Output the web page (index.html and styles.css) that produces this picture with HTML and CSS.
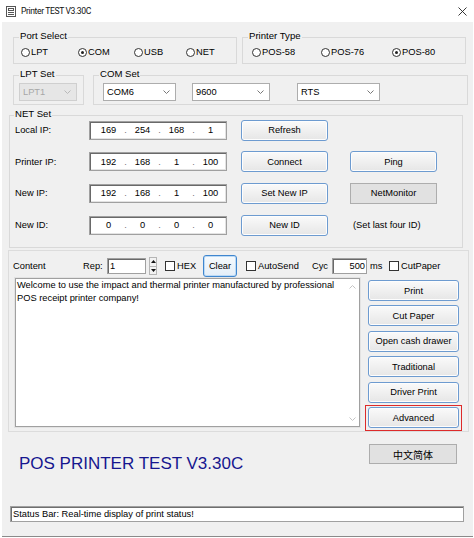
FILE: index.html
```html
<!DOCTYPE html>
<html>
<head>
<meta charset="utf-8">
<title>Printer TEST V3.30C</title>
<link rel="stylesheet" href="styles.css">
</head>
<body>
<div class="titlebar">
  <svg class="app-icon" viewBox="0 0 10 11" width="10" height="11">
    <rect x="0.5" y="0.5" width="9" height="10" fill="#fff" stroke="#555"/>
    <rect x="2.5" y="2.5" width="5" height="2" fill="none" stroke="#555"/>
    <line x1="2" y1="6.5" x2="8" y2="6.5" stroke="#555"/>
    <line x1="2" y1="8.5" x2="8" y2="8.5" stroke="#555"/>
  </svg>
  <span class="title">Printer TEST V3.30C</span>
  <svg class="close" viewBox="0 0 9 9" width="9" height="9">
    <line x1="0.5" y1="0.5" x2="8.5" y2="8.5" stroke="#222" stroke-width="0.9"/>
    <line x1="8.5" y1="0.5" x2="0.5" y2="8.5" stroke="#222" stroke-width="0.9"/>
  </svg>
</div>

<div class="window">
  <div class="row1">
    <fieldset class="grp port">
      <legend>Port Select</legend>
      <div class="radios port-radios">
        <label class="radio w57"><span class="circle"></span>LPT</label>
        <label class="radio w56"><span class="circle on"></span>COM</label>
        <label class="radio w52"><span class="circle"></span>USB</label>
        <label class="radio"><span class="circle"></span>NET</label>
      </div>
    </fieldset>
    <fieldset class="grp ptype">
      <legend>Printer Type</legend>
      <div class="radios pt-radios">
        <label class="radio w69"><span class="circle"></span>POS-58</label>
        <label class="radio w71"><span class="circle"></span>POS-76</label>
        <label class="radio"><span class="circle on"></span>POS-80</label>
      </div>
    </fieldset>
  </div>

  <div class="row2">
    <fieldset class="grp lpt">
      <legend>LPT Set</legend>
      <div class="combos lpt-combos">
        <div class="combo disabled w58"><span>LPT1</span><svg class="chev" viewBox="0 0 7 4" width="7" height="4"><polyline points="0.5,0.5 3.5,3.5 6.5,0.5" fill="none" stroke="#b8b8b8"/></svg></div>
      </div>
    </fieldset>
    <fieldset class="grp com">
      <legend>COM Set</legend>
      <div class="combos com-combos">
        <div class="combo w73"><span>COM6</span><svg class="chev" viewBox="0 0 7 4" width="7" height="4"><polyline points="0.5,0.5 3.5,3.5 6.5,0.5" fill="none" stroke="#777"/></svg></div>
        <div class="combo w78 ml16"><span>9600</span><svg class="chev" viewBox="0 0 7 4" width="7" height="4"><polyline points="0.5,0.5 3.5,3.5 6.5,0.5" fill="none" stroke="#777"/></svg></div>
        <div class="combo w83 ml27"><span>RTS</span><svg class="chev" viewBox="0 0 7 4" width="7" height="4"><polyline points="0.5,0.5 3.5,3.5 6.5,0.5" fill="none" stroke="#777"/></svg></div>
      </div>
    </fieldset>
  </div>

  <fieldset class="grp net">
    <legend>NET Set</legend>
    <div class="netrows">
      <div class="netrow">
        <span class="lbl">Local IP:</span>
        <div class="ipfield"><span class="oct">169</span><span class="dot">.</span><span class="oct">254</span><span class="dot">.</span><span class="oct">168</span><span class="dot">.</span><span class="oct">1</span></div>
        <button class="btn net-btn">Refresh</button>
      </div>
      <div class="netrow">
        <span class="lbl">Printer IP:</span>
        <div class="ipfield"><span class="oct">192</span><span class="dot">.</span><span class="oct">168</span><span class="dot">.</span><span class="oct">1</span><span class="dot">.</span><span class="oct">100</span></div>
        <button class="btn net-btn">Connect</button>
        <button class="btn net-btn2">Ping</button>
      </div>
      <div class="netrow">
        <span class="lbl">New IP:</span>
        <div class="ipfield"><span class="oct">192</span><span class="dot">.</span><span class="oct">168</span><span class="dot">.</span><span class="oct">1</span><span class="dot">.</span><span class="oct">100</span></div>
        <button class="btn net-btn">Set New IP</button>
        <button class="btn flat net-btn2">NetMonitor</button>
      </div>
      <div class="netrow">
        <span class="lbl">New ID:</span>
        <div class="ipfield"><span class="oct">0</span><span class="dot">.</span><span class="oct">0</span><span class="dot">.</span><span class="oct">0</span><span class="dot">.</span><span class="oct">0</span></div>
        <button class="btn net-btn">New ID</button>
        <span class="hint">(Set last four ID)</span>
      </div>
    </div>
  </fieldset>

  <div class="content">
    <div class="toolbar">
      <span class="t-content">Content</span>
      <span class="t-rep">Rep:</span>
      <div class="field rep-field">1</div>
      <div class="spinner">
        <span class="spin-half"><svg viewBox="0 0 5 3" width="5" height="3"><polygon points="0,3 2.5,0 5,3" fill="#111"/></svg></span>
        <span class="spin-half"><svg viewBox="0 0 5 3" width="5" height="3"><polygon points="0,0 2.5,3 5,0" fill="#111"/></svg></span>
      </div>
      <label class="check hex"><span class="box"></span>HEX</label>
      <button class="btn focused clear">Clear</button>
      <label class="check autosend"><span class="box"></span>AutoSend</label>
      <span class="t-cyc">Cyc</span>
      <div class="field cyc-field">500</div>
      <span class="t-ms">ms</span>
      <label class="check"><span class="box"></span>CutPaper</label>
    </div>
    <div class="content-body">
      <div class="textarea">
        <div class="text">Welcome to use the impact and thermal printer manufactured by professional<br>POS receipt printer company!</div>
        <div class="vscroll">
          <svg viewBox="0 0 7 4" width="7" height="4"><polyline points="0.5,3.5 3.5,0.5 6.5,3.5" fill="none" stroke="#c4c4c4"/></svg>
          <svg viewBox="0 0 7 4" width="7" height="4"><polyline points="0.5,0.5 3.5,3.5 6.5,0.5" fill="none" stroke="#c4c4c4"/></svg>
        </div>
      </div>
      <div class="side-btns">
        <button class="btn side">Print</button>
        <button class="btn side">Cut Paper</button>
        <button class="btn side">Open cash drawer</button>
        <button class="btn side">Traditional</button>
        <button class="btn side">Driver Print</button>
        <button class="btn side marked">Advanced</button>
      </div>
    </div>
  </div>

  <div class="bottom-row">
    <div class="bigtitle">POS PRINTER TEST V3.30C</div>
    <button class="btn flat lang">中文简体</button>
  </div>

  <div class="status">Status Bar: Real-time display of print status!</div>
</div>
</body>
</html>
```

FILE: styles.css
```css
* { box-sizing: border-box; }
html, body { margin: 0; padding: 0; }
body {
  width: 474px;
  height: 538px;
  overflow: hidden;
  background: #ffffff;
  font-family: "Liberation Sans", Arial, sans-serif;
  font-size: 9.3px;
  color: #000;
}

/* title bar */
.titlebar {
  height: 22px;
  display: flex;
  align-items: center;
  padding-left: 6px;
  background: #fff;
}
.app-icon { margin-right: 5px; flex: none; }
.title {
  font-family: Roboto, "Noto Sans", sans-serif;
  font-size: 8.6px;
  letter-spacing: -0.4px;
  color: #111;
}
.close { margin-left: auto; margin-right: 7px; }

/* window body */
.window {
  margin-left: 2px;
  width: 471px;
  height: 515px;
  background: #f0f0f0;
  border-bottom: 1px solid #8a8a8a;
  padding-top: 9px;
}

/* group boxes */
.grp {
  margin: 0;
  padding: 0;
  min-width: 0;
  border: 1px solid #d9d9d9;
}
.grp legend {
  margin-left: 5px;
  padding: 0 1px 2px;
  line-height: 10px;
  font-size: 9.6px;
}

.row1 {
  display: flex;
  gap: 5px;
  margin-left: 11px;
}
.port, .ptype { width: 224px; }

.radios {
  display: flex;
  align-items: center;
  height: 20px;
  padding: 2px 0 4px 7px;
}
.pt-radios { padding-left: 9px; }
.radio {
  display: flex;
  align-items: center;
  gap: 1px;
  white-space: nowrap;
}
.w52 { width: 52px; }
.w56 { width: 56px; }
.w57 { width: 57px; }
.w69 { width: 69px; }
.w71 { width: 71px; }
.circle {
  width: 9px;
  height: 9px;
  border-radius: 50%;
  border: 1px solid #333;
  background: #fff;
  display: flex;
  align-items: center;
  justify-content: center;
  flex: none;
}
.circle.on::after {
  content: "";
  width: 3px;
  height: 3px;
  border-radius: 50%;
  background: #222;
}

.row2 {
  display: flex;
  gap: 9px;
  margin: 5px 0 0 11px;
}
.lpt { width: 71px; }
.com { width: 375px; }
.combos {
  display: flex;
  align-items: center;
  padding: 2px 0 3px 5px;
}
.com-combos { padding-left: 9px; }
.combo {
  height: 18px;
  border: 1px solid #adadad;
  background: #fff;
  display: flex;
  align-items: center;
  justify-content: space-between;
  padding: 0 5px 0 3px;
}
.combo.disabled {
  background: #e6e6e6;
  border-color: #cfcfcf;
  color: #a7a7a7;
}
.w58 { width: 58px; }
.w73 { width: 73px; }
.w78 { width: 78px; }
.w83 { width: 83px; }
.ml16 { margin-left: 16px; }
.ml27 { margin-left: 27px; }

/* NET set */
.net {
  width: 454px;
  margin: 4px 0 0 7px;
}
.net legend { margin-left: 4px; }
.netrows {
  display: flex;
  flex-direction: column;
  gap: 9.7px;
  margin-top: -2px;
  padding: 0 0 11px 5px;
}
.netrow {
  display: flex;
  align-items: center;
  height: 22px;
}
.lbl { width: 74px; }
.ipfield {
  width: 138px;
  height: 19px;
  display: flex;
  align-items: center;
  padding-left: 5px;
  background: #fff;
  border: 1px solid #a0a0a0;
  box-shadow: inset 1px 1px 0 #696969, inset -1px -1px 0 #e3e3e3;
}
.oct { width: 27px; text-align: center; }
.dot { width: 7px; text-align: center; color: #777; }
.net-btn { margin-left: 14px; }
.net-btn2 { margin-left: 22px; }
.hint { margin-left: 25px; }

/* buttons */
.btn {
  position: relative;
  font-family: "Liberation Sans", Arial, sans-serif;
  font-size: 9.3px;
  color: #000;
  display: flex;
  align-items: center;
  justify-content: center;
  padding: 0;
  width: 87px;
  height: 21px;
  border: 1px solid #6d9bd0;
  border-radius: 3px;
  background: linear-gradient(#fafafa, #e6e6e6);
  box-shadow: inset 0 0 0 1px #fdfdfd;
  white-space: nowrap;
}
.btn.flat {
  border: 1px solid #adadad;
  border-radius: 0;
  background: #e1e1e1;
  box-shadow: none;
}
.btn.focused {
  border-color: #3f86cf;
  background: linear-gradient(#f6fafd, #e4eef8);
  box-shadow: inset 0 0 0 1px #bcdaf5;
}

/* content box */
.content {
  margin: 2px 0 0 6px;
  width: 461px;
  border: 1px solid #dcdcdc;
  padding: 4px 0 3px 4px;
}
.toolbar {
  display: flex;
  align-items: center;
  height: 22px;
  white-space: nowrap;
}
.t-content { width: 70px; }
.t-rep { width: 24px; }
.field {
  height: 16px;
  background: #fff;
  border: 1px solid #a0a0a0;
  box-shadow: inset 1px 1px 0 #696969;
  display: flex;
  align-items: center;
}
.rep-field { width: 39px; padding-left: 2px; }
.spinner {
  width: 8px;
  height: 18px;
  margin-left: 3px;
  display: flex;
  flex-direction: column;
  border: 1px solid #b5b5b5;
  background: #f2f2f2;
}
.spin-half {
  flex: 1;
  display: flex;
  align-items: center;
  justify-content: center;
}
.spin-half + .spin-half { border-top: 1px solid #b5b5b5; }
.check {
  display: flex;
  align-items: center;
  gap: 2px;
}
.box {
  width: 10px;
  height: 10px;
  border: 1px solid #333;
  background: #fff;
  flex: none;
}
.hex { width: 38px; margin-left: 8px; }
.clear { width: 34px; height: 22px; }
.autosend { width: 66px; margin-left: 9px; }
.t-cyc { width: 20px; }
.cyc-field { width: 35px; justify-content: flex-end; padding-right: 1px; }
.t-ms { width: 19px; margin-left: 3px; }

.content-body {
  display: flex;
  margin-top: 1px;
}
.textarea {
  width: 345px;
  height: 149px;
  margin-left: 2px;
  background: #fff;
  border: 1px solid #a0a0a0;
  box-shadow: 0 0 0 1px #e3e3e3;
  display: flex;
}
.text {
  flex: 1;
  padding: 0 0 0 1px;
  line-height: 12.5px;
}
.vscroll {
  width: 13px;
  display: flex;
  flex-direction: column;
  justify-content: space-between;
  align-items: center;
  padding: 6px 0 5px;
}
.side-btns {
  display: flex;
  flex-direction: column;
  gap: 4.4px;
  margin-left: 8px;
  padding-top: 2px;
}
.btn.side { width: 91px; height: 21px; }
.btn.marked::after {
  content: "";
  position: absolute;
  left: -4px;
  top: -3px;
  right: -4px;
  bottom: -4px;
  border: 1px solid #dd2a2a;
}

/* bottom */
.bottom-row {
  display: flex;
  justify-content: space-between;
  align-items: flex-start;
  margin-top: 12px;
}
.bigtitle {
  margin: 10px 0 0 17px;
  font-size: 17px;
  line-height: 20px;
  color: #16168f;
}
.btn.lang {
  width: 88px;
  height: 20px;
  margin-right: 16px;
  font-family: "Liberation Sans", "Noto Sans CJK SC", sans-serif;
  font-size: 10px;
}
.status {
  margin: 32px 0 0 8px;
  width: 454px;
  height: 16px;
  background: #fff;
  border: 1px solid #a0a0a0;
  box-shadow: inset 1px 1px 0 #6e6e6e;
  padding-left: 2px;
  display: flex;
  align-items: center;
  white-space: nowrap;
}
```
